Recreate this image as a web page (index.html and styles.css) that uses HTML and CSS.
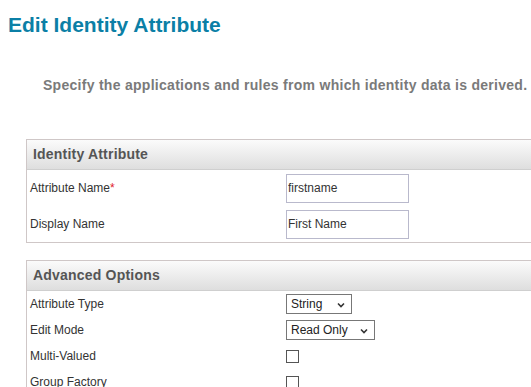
FILE: index.html
```html
<!DOCTYPE html>
<html>
<head>
<meta charset="utf-8">
<link rel="stylesheet" href="styles.css">
</head>
<body>
<h1 class="title">Edit Identity Attribute</h1>
<p class="subtitle">Specify the applications and rules from which identity data is derived.</p>

<section class="panel">
  <div class="panel-head">Identity Attribute</div>
  <div class="rows rows-tall">
    <div class="row">
      <span class="label">Attribute Name<span class="req">*</span></span>
      <input class="text" type="text" value="firstname">
    </div>
    <div class="row">
      <span class="label">Display Name</span>
      <input class="text" type="text" value="First Name">
    </div>
  </div>
</section>

<section class="panel panel-adv">
  <div class="panel-head">Advanced Options</div>
  <div class="rows">
    <div class="row">
      <span class="label">Attribute Type</span>
      <span class="sel sel-string"><span class="sel-text">String</span><svg class="chev" width="8" height="6" viewBox="0 0 8 6"><path d="M1 1.5 L4 4.5 L7 1.5" fill="none" stroke="#333" stroke-width="1.6"/></svg></span>
    </div>
    <div class="row">
      <span class="label">Edit Mode</span>
      <span class="sel sel-mode"><span class="sel-text">Read Only</span><svg class="chev" width="8" height="6" viewBox="0 0 8 6"><path d="M1 1.5 L4 4.5 L7 1.5" fill="none" stroke="#333" stroke-width="1.6"/></svg></span>
    </div>
    <div class="row">
      <span class="label">Multi-Valued</span>
      <span class="check"></span>
    </div>
    <div class="row">
      <span class="label">Group Factory</span>
      <span class="check"></span>
    </div>
  </div>
</section>
</body>
</html>
```

FILE: styles.css
```css
html, body {
  margin: 0;
  padding: 0;
  background: #ffffff;
  font-family: "Liberation Sans", Arial, sans-serif;
  overflow: hidden;
}

.title {
  margin: 0;
  padding: 13px 0 0 8px;
  font-size: 21px;
  font-weight: bold;
  color: #0b7fa6;
  line-height: 24px;
}

.subtitle {
  margin: 0;
  padding: 40px 0 0 43px;
  font-size: 14px;
  font-weight: bold;
  letter-spacing: 0.28px;
  color: #7a7a7a;
  line-height: 16px;
  white-space: nowrap;
}

.panel {
  margin: 46px 0 0 26px;
  width: 505px;
  border: 1px solid #cfc7c7;
  border-right: none;
}

.panel-adv {
  margin-top: 17px;
}

.panel-head {
  height: 29px;
  line-height: 29px;
  padding-left: 6px;
  font-size: 14px;
  letter-spacing: 0.2px;
  font-weight: bold;
  color: #555555;
  background: linear-gradient(to bottom, #fbfbfb, #dedede);
  border-bottom: 1px solid #cfcfcf;
}

.rows {
  display: flex;
  flex-direction: column;
}

.row {
  display: grid;
  grid-template-columns: 259px auto;
  align-items: center;
  justify-items: start;
  height: 26px;
}

.rows-tall .row {
  height: 36px;
}

.label {
  padding-left: 3px;
  font-size: 12px;
  color: #333333;
}

.req {
  color: #e0202a;
}

.text {
  box-sizing: border-box;
  width: 123px;
  height: 29px;
  margin: 0;
  padding: 0 0 0 1px;
  border: 1px solid #b9b9cc;
  font-family: "Liberation Sans", Arial, sans-serif;
  font-size: 12px;
  color: #333333;
  outline: none;
}

.sel {
  position: relative;
  box-sizing: border-box;
  display: flex;
  align-items: center;
  height: 20px;
  border: 1px solid #777777;
  padding-left: 4px;
  font-size: 12px;
  color: #222222;
}

.sel-string { width: 66px; }
.sel-mode { width: 89px; }

.chev {
  position: absolute;
  right: 6px;
  top: 7px;
}

.check {
  box-sizing: border-box;
  width: 13px;
  height: 13px;
  border: 1px solid #555555;
  background: #ffffff;
}
```
